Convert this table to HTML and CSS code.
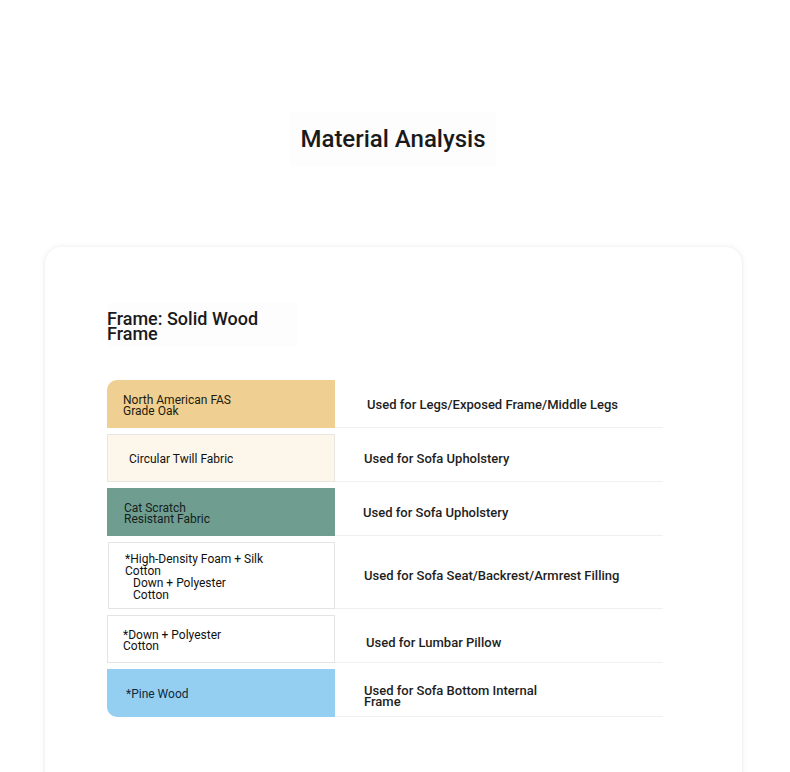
FILE: index.html
```html
<!DOCTYPE html>
<html lang="en">
<head>
<meta charset="utf-8">
<title>Material Analysis</title>
<link rel="stylesheet" href="styles.css">
</head>
<body>
<header class="page-head">
  <h1 class="title">Material Analysis</h1>
</header>
<section class="card">
  <h2 class="frame-title">Frame: Solid Wood Frame</h2>
  <div class="table">
    <div class="row">
      <div class="mat oak"><span class="mat-text w110">North American FAS Grade Oak</span></div>
      <div class="use use-pad4">Used for Legs/Exposed Frame/Middle Legs</div>
    </div>
    <div class="row">
      <div class="mat twill"><span class="mat-text pad5">Circular Twill Fabric</span></div>
      <div class="use">Used for Sofa Upholstery</div>
    </div>
    <div class="row">
      <div class="mat green"><span class="mat-text w90 pad1">Cat Scratch Resistant Fabric</span></div>
      <div class="use use-pad-1">Used for Sofa Upholstery</div>
    </div>
    <div class="row tall">
      <div class="mat plain foam">
        <span class="mat-text w150">*High-Density Foam + Silk Cotton</span>
        <span class="mat-text sub">Down + Polyester Cotton</span>
      </div>
      <div class="use">Used for Sofa Seat/Backrest/Armrest Filling</div>
    </div>
    <div class="row">
      <div class="mat plain down"><span class="mat-text w110 padm1">*Down + Polyester Cotton</span></div>
      <div class="use use-pad2 low">Used for Lumbar Pillow</div>
    </div>
    <div class="row">
      <div class="mat pine"><span class="mat-text pad2">*Pine Wood</span></div>
      <div class="use lower"><span class="w180">Used for Sofa Bottom Internal Frame</span></div>
    </div>
  </div>
</section>
</body>
</html>
```

FILE: styles.css
```css
* { box-sizing: border-box; }
html, body { margin: 0; padding: 0; background: #ffffff; }
body {
  font-family: Roboto, "Noto Sans", "Liberation Sans", sans-serif;
  color: #1c1c1c;
  height: 772px;
  overflow: hidden;
}
.page-head {
  display: flex;
  justify-content: center;
  padding-top: 112px;
  padding-right: 4px;
}
.title {
  margin: 0;
  font-size: 24px;
  font-weight: 500;
  line-height: 28px;
  padding: 13px 10px 14px;
  background: #fdfdfd;
  color: #1a1a1a;
}
.card {
  margin: 80px 48px 0 45px;
  background: #fff;
  border-radius: 16px;
  box-shadow: 0 0 6px rgba(0,0,0,0.08), 0 1px 3px rgba(0,0,0,0.05);
  padding: 56px 0 120px 62px;
}
.frame-title {
  margin: 0 0 33px;
  font-size: 18px;
  font-weight: 500;
  line-height: 15px;
  width: 190px;
  padding: 8px 14px 6px 0;
  background: #fdfdfd;
  color: #1a1a1a;
}
.table {
  width: 556px;
  display: flex;
  flex-direction: column;
  gap: 6px;
}
.row {
  display: flex;
  height: 48px;
}
.row.tall { height: 67px; }
.mat {
  width: 228px;
  flex: none;
  display: flex;
  flex-direction: column;
  justify-content: center;
  padding: 3px 16px 0;
  font-size: 12px;
  line-height: 11px;
  color: #111;
}
.mat-text { display: block; }
.oak { background: #efd092; border-top-left-radius: 10px; color: #221a0c; }
.twill { background: #fcf7ea; border: 1px solid #e8e6e0; }
.green { background: #6f9e90; color: #15201c; }
.plain { background: #fff; border: 1px solid #e4e4e4; }
.foam { margin-left: 1px; width: 227px; line-height: 12px; }
.pine { background: #94cff2; border-bottom-left-radius: 10px; color: #10283c; }
.w110 { max-width: 112px; }
.w90 { max-width: 92px; }
.w150 { max-width: 150px; }
.sub { padding-left: 8px; max-width: 110px; }
.pad5 { padding-left: 5px; }
.pad2 { padding-left: 3px; }
.pad1 { padding-left: 1px; }
.padm1 { margin-left: -1px; }
.use {
  flex: 1;
  display: flex;
  align-items: center;
  padding-left: 29px;
  padding-top: 1px;
  font-size: 13px;
  font-weight: 500;
  line-height: 11px;
  color: #1e1e1e;
  border-bottom: 1px solid #f0f0f0;
}
.use-pad4 { padding-left: 32px; }
.use-pad-1 { padding-left: 28px; }
.use-pad2 { padding-left: 31px; }
.low { padding-top: 7px; }
.lower { padding-top: 6px; }
.w180 { max-width: 180px; }
```
